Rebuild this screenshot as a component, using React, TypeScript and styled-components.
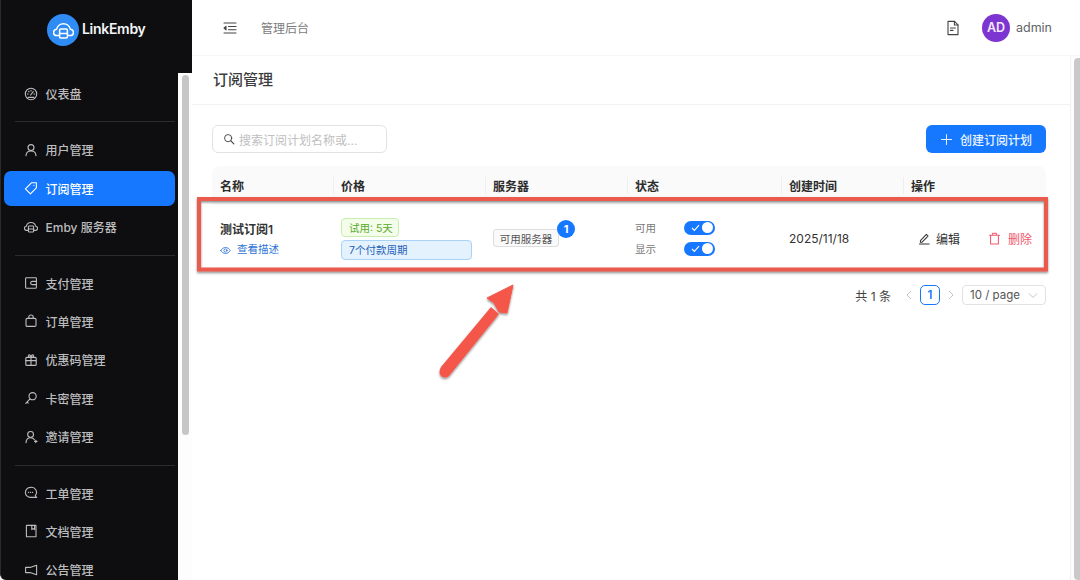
import React from "react";
import styled, { createGlobalStyle } from "styled-components";

const Global = createGlobalStyle`
  html, body { margin: 0; padding: 0; width: 1080px; height: 580px; overflow: hidden; background: #fff; }
  * { box-sizing: border-box; }
  body { font-family: Inter, "Noto Sans CJK SC", sans-serif; }
`;

const Page = styled.div`
  position: relative;
  display: flex;
  width: 1080px;
  height: 580px;
  overflow: hidden;
  background: #fff;
`;

const Sidebar = styled.aside`
  width: 192px;
  height: 580px;
  flex: none;
  display: flex;
  flex-direction: column;
  background: #0e0e10;
  border-left: 1px solid #2a2a2a;
  border-bottom-left-radius: 6px;
`;

const Brand = styled.div`
  height: 73px;
  flex: none;
  display: flex;
  align-items: flex-start;
  padding: 14px 0 0 46px;
  gap: 3px;
  color: #f2f4f7;
  font-size: 14px;
  font-weight: 600;
`;

const BrandText = styled.span`
  line-height: 30px;
  letter-spacing: -0.3px;
`;

const LogoDisc = styled.div`
  width: 32px;
  height: 32px;
  border-radius: 50%;
  background: #2f8cf5;
  display: flex;
  align-items: center;
  justify-content: center;
`;

const SideBody = styled.div`
  flex: 1;
  display: flex;
  min-height: 0;
`;

const Menu = styled.nav`
  width: 177px;
  flex: none;
  overflow: hidden;
  padding: 3px 3px 0 2.5px;
`;

const MenuItem = styled.div<{ $active?: boolean }>`
  height: 35px;
  margin-bottom: 3.4px;
  display: flex;
  align-items: center;
  gap: 8px;
  padding-left: 20px;
  border-radius: 7px;
  font-size: 12px;
  color: ${(p) => (p.$active ? "#fff" : "#bdbdbf")};
  font-weight: 500;
  background: ${(p) => (p.$active ? "#1677ff" : "transparent")};
  svg { flex: none; }
`;

const MenuDivider = styled.div`
  height: 1px;
  background: #2c2c2e;
  margin: 10.4px 0 10px 11px;
`;

const Track = styled.div`
  width: 14px;
  flex: none;
  background: #fdfdfd;
  padding: 2px 3px 0 4px;
`;

const Thumb = styled.div`
  height: 360px;
  background: #c6c6c6;
  border-radius: 4px;
`;

const Main = styled.main`
  flex: 1;
  min-width: 0;
  display: flex;
  flex-direction: column;
  background: #fff;
`;

const Header = styled.header`
  height: 56px;
  flex: none;
  display: flex;
  align-items: center;
  padding: 0 28px 0 31px;
  border-bottom: 1px solid #f6f6f6;
`;

const HeaderTitle = styled.span`
  margin-left: 24px;
  font-size: 12px;
  color: #7c7c7c;
`;

const HeaderRight = styled.div`
  margin-left: auto;
  display: flex;
  align-items: center;
`;

const Avatar = styled.div`
  width: 28px;
  height: 28px;
  margin-left: 22px;
  border-radius: 50%;
  background: #7c35d1;
  color: #f3eafc;
  font-size: 12.5px;
  font-weight: 600;
  display: flex;
  align-items: center;
  justify-content: center;
`;

const UserName = styled.span`
  margin-left: 6px;
  font-size: 12.5px;
  color: #5f6368;
`;

const Body = styled.div`
  flex: 1;
  min-height: 0;
  display: flex;
`;

const Content = styled.div`
  flex: 1;
  min-width: 0;
`;

const PageTitleBar = styled.div`
  height: 49px;
  display: flex;
  align-items: center;
  padding: 0 0 4px 21px;
  border-bottom: 1px solid #f2f2f2;
  font-size: 15px;
  font-weight: 500;
  color: #3c3c3c;
`;

const Toolbar = styled.div`
  display: flex;
  align-items: flex-start;
  justify-content: space-between;
  padding: 20px 24px 0 20px;
  height: 61px;
`;

const Search = styled.div`
  width: 175px;
  height: 28px;
  display: flex;
  align-items: center;
  gap: 4px;
  padding-left: 10px;
  border: 1px solid #e2e2e2;
  border-radius: 6px;
  font-size: 12px;
  color: #c0c0c0;
  svg { flex: none; }
`;

const PrimaryButton = styled.button`
  width: 120px;
  height: 28px;
  display: flex;
  align-items: center;
  justify-content: center;
  gap: 7px;
  padding: 0;
  border: 0;
  border-radius: 6px;
  background: #1677ff;
  color: #eaf3ff;
  font: 500 12px Inter, "Noto Sans CJK SC", sans-serif;
`;

const TableWrap = styled.div`
  margin: 0 24px 0 20px;
`;

const Row = styled.div`
  display: grid;
  grid-template-columns: 121px 152px 142px 154px 122px 1fr;
`;

const HeadRow = styled(Row)`
  height: 39px;
  background: #fafafa;
  border-radius: 8px 8px 0 0;
`;

const HeadCell = styled.div<{ $first?: boolean }>`
  position: relative;
  display: flex;
  align-items: center;
  padding-left: 8px;
  font-size: 12px;
  font-weight: 600;
  color: #2c2c2c;
  ${(p) =>
    p.$first
      ? ""
      : `&::before { content: ""; position: absolute; left: 0; top: 11px; height: 17px; width: 1px; background: #eeeeee; }`}
`;

const DataRow = styled(Row)`
  height: 67px;
  border-bottom: 1px solid #f0f0f0;
`;

const Cell = styled.div`
  display: flex;
  flex-direction: column;
  justify-content: center;
  padding-left: 8px;
  min-width: 0;
`;

const PlanName = styled.div`
  font-size: 12px;
  font-weight: 600;
  color: #333;
  line-height: 18px;
  margin-top: 3px;
`;

const DescLink = styled.div`
  display: flex;
  align-items: center;
  gap: 6px;
  margin-top: 3px;
  font-size: 10.5px;
  line-height: 16px;
  color: #2f74d8;
`;

const TagPill = styled.span<{ $kind: "green" | "blue" }>`
  display: flex;
  align-items: center;
  height: ${(p) => (p.$kind === "green" ? "19px" : "20px")};
  width: ${(p) => (p.$kind === "green" ? "58px" : "131px")};
  margin-top: ${(p) => (p.$kind === "green" ? "1px" : "3px")};
  padding-left: 7px;
  border-radius: 4px;
  font-size: 10.5px;
  border: 1px solid ${(p) => (p.$kind === "green" ? "#c9ecb0" : "#a9d2f7")};
  background: ${(p) => (p.$kind === "green" ? "#f4fde9" : "#e4f2fe")};
  color: ${(p) => (p.$kind === "green" ? "#5aa92e" : "#2660b8")};
`;

const ServerWrap = styled.div`
  position: relative;
  width: 66px;
`;

const ServerChip = styled.div`
  height: 18px;
  display: flex;
  align-items: center;
  justify-content: center;
  border: 1px solid #dedede;
  border-radius: 3px;
  background: #fafafa;
  font-size: 10.5px;
  color: #555;
`;

const Badge = styled.span`
  position: absolute;
  top: -9px;
  right: -16px;
  width: 18px;
  height: 18px;
  border-radius: 50%;
  background: #1677ff;
  color: #fff;
  font-size: 11px;
  font-weight: 700;
  display: flex;
  align-items: center;
  justify-content: center;
`;

const StatusLine = styled.div`
  display: flex;
  align-items: center;
  height: 21px;
  font-size: 10.5px;
  color: #777;
`;

const Switch = styled.span`
  width: 31px;
  height: 14px;
  margin-left: 28px;
  padding: 0 2px 0 7px;
  border-radius: 7px;
  background: #1677ff;
  display: flex;
  align-items: center;
  justify-content: space-between;
`;

const Knob = styled.span`
  width: 11px;
  height: 11px;
  border-radius: 50%;
  background: #fff;
`;

const DateText = styled.span`
  font-size: 12px;
  color: #333;
`;

const Actions = styled.div`
  display: flex;
  align-items: center;
  padding-left: 15px;
  height: 100%;
`;

const ActionLink = styled.span<{ $danger?: boolean }>`
  display: flex;
  align-items: center;
  gap: ${(p) => (p.$danger ? "7px" : "5px")};
  font-size: 12px;
  margin-right: 28px;
  white-space: nowrap;
  color: ${(p) => (p.$danger ? "#f0566b" : "#333")};
`;

const Pager = styled.div`
  display: flex;
  align-items: center;
  justify-content: flex-end;
  height: 20px;
  margin-top: 13px;
`;

const PagerTotal = styled.span`
  font-size: 12px;
  color: #444;
  margin-right: 14px;
`;

const PagerNow = styled.span`
  width: 20px;
  height: 20px;
  margin: 0 7px;
  border: 1px solid #1677ff;
  border-radius: 5px;
  display: flex;
  align-items: center;
  justify-content: center;
  font-size: 11.5px;
  font-weight: 600;
  color: #1677ff;
`;

const PageSize = styled.span`
  width: 84px;
  height: 20px;
  margin-left: 7px;
  padding: 0 7px;
  border: 1px solid #e2e2e2;
  border-radius: 4px;
  display: flex;
  align-items: center;
  justify-content: space-between;
  font-size: 11.5px;
  color: #555;
`;

const RightTrack = styled.div`
  width: 10px;
  flex: none;
  background: #fdfdfd;
  border-left: 1px solid #f0f0f0;
  padding: 2px 0 0 3px;
`;

const RightThumb = styled.div`
  height: 522px;
  background: #c9c9c9;
  border-radius: 4px 0 0 4px;
`;

const Annotation = styled.svg`
  position: absolute;
  left: 0;
  top: 0;
  width: 1080px;
  height: 580px;
  pointer-events: none;
`;

type IconProps = { c?: string; s?: number; w?: number; children: React.ReactNode };
const Ic = ({ c = "#bdbdbf", s = 14, w = 1.1, children }: IconProps) => (
  <svg width={s} height={s} viewBox="0 0 14 14" fill="none" stroke={c} strokeWidth={w} strokeLinecap="round" strokeLinejoin="round">
    {children}
  </svg>
);

const CloudShape = () => (
  <>
    <path d="M3.8 10.4H2.6A2.1 2.1 0 0 1 2.4 6.2 4.7 4.7 0 0 1 11.6 6.2 2.1 2.1 0 0 1 11.4 10.4H10.2" />
    <rect x="4.4" y="6" width="5.2" height="6" rx="0.8" />
    <path d="M4.4 9H9.6" />
  </>
);

type NavEntry = { t: string; i: React.ReactNode; a?: boolean };
const items: (string | NavEntry)[] = [
  { t: "仪表盘", i: <><circle cx="7" cy="7" r="5.7" /><path d="M6.6 8 9.2 4.6M3.4 7H4.2M9.9 7H10.6M4.6 4.4 5.1 4.9M7 3.2V3.9M4 10.4H10" /></> },
  "d",
  { t: "用户管理", i: <><circle cx="7" cy="4.6" r="3" /><path d="M2 12.6C2.2 9.8 4.2 8 7 8S11.8 9.8 12 12.6" /></> },
  { t: "订阅管理", a: true, i: <><path d="M1.4 7.8 7.4 1.8 12.4 1.8 12.4 6.8 6.4 12.8Z" /><path d="M9.9 4.3 10 4.4" /></> },
  { t: "Emby 服务器", i: <CloudShape /> },
  "d",
  { t: "支付管理", i: <><rect x="1.6" y="1.8" width="10.8" height="10.4" rx="0.6" /><path d="M12.4 5.4H8.2A1.6 1.6 0 0 0 8.2 8.6H12.4" /></> },
  { t: "订单管理", i: <><rect x="2" y="4.4" width="10" height="8" rx="1.2" /><path d="M4.8 4.4V3A2.2 2 0 0 1 9.2 3V4.4" /></> },
  { t: "优惠码管理", i: <><rect x="1.8" y="4.4" width="10.4" height="8" rx="1" /><path d="M1.8 7.6H12.2M7 4.4V12.4M7 4.4C5 4.4 3.8 3.4 4.6 2.2 5.4 1.2 7 2.6 7 4.4 7 2.6 8.6 1.2 9.4 2.2 10.2 3.4 9 4.4 7 4.4Z" /></> },
  { t: "卡密管理", i: <><circle cx="8.6" cy="5.2" r="3.6" /><path d="M6 7.8 1.8 12.4M3 11 4.2 12.2" /></> },
  { t: "邀请管理", i: <><circle cx="6.6" cy="4.4" r="2.9" /><path d="M2 12.6C2.2 9.8 4 7.8 6.6 7.8S9.8 8.6 10.4 9.8M10.6 11.4H13M11.8 10.2V12.6" /></> },
  "d",
  { t: "工单管理", i: <><path d="M6.4 1.4A5 5 0 1 0 6.4 11.4H12.6L11.2 9.6A5 5 0 0 0 6.4 1.4Z" /><path d="M4.4 6.4H4.6M6.4 6.4H6.6M8.4 6.4H8.6" /></> },
  { t: "文档管理", i: <><rect x="2.4" y="1.4" width="9.6" height="11.4" rx="0.4" /><path d="M7.8 1.4V5.6L9.2 4.6 10.6 5.6V1.4" /></> },
  { t: "公告管理", i: <path d="M12.6 2.2V11.8L6 9.6H1.6V4.4H6Z" /> },
];

const Check = () => (
  <svg width="9" height="8" viewBox="0 0 9 8" fill="none" stroke="#fff" strokeWidth={1.1}>
    <path d="M1 4 3.4 6.4 8 1.2" />
  </svg>
);

export default function App() {
  return (
    <Page>
      <Global />
      <Sidebar>
        <Brand>
          <LogoDisc>
            <svg width="21" height="21" viewBox="0 0 14 14" fill="none" stroke="#fff" strokeWidth={1} strokeLinecap="round" strokeLinejoin="round">
              <CloudShape />
            </svg>
          </LogoDisc>
          <BrandText>LinkEmby</BrandText>
        </Brand>
        <SideBody>
          <Menu>
            {items.map((it, i) =>
              typeof it === "string" ? (
                <MenuDivider key={i} />
              ) : (
                <MenuItem key={i} $active={it.a}>
                  <Ic c={it.a ? "#fff" : undefined}>{it.i}</Ic>
                  {it.t}
                </MenuItem>
              )
            )}
          </Menu>
          <Track>
            <Thumb />
          </Track>
        </SideBody>
      </Sidebar>
      <Main>
        <Header>
          <svg width="14" height="14" viewBox="0 0 14 14" fill="none" stroke="#444" strokeWidth={1.1} strokeLinecap="round" strokeLinejoin="round">
            <path d="M1 2H13M5.5 5.5H13M5.5 8.8H13M1 12H13" />
            <path d="M3 5.4 1 7.1 3 8.8Z" fill="#444" />
          </svg>
          <HeaderTitle>管理后台</HeaderTitle>
          <HeaderRight>
            <svg width="14" height="16" viewBox="0 0 14 16" fill="none" stroke="#444" strokeWidth={1.1} strokeLinejoin="round" strokeLinecap="round">
              <path d="M2 1.4H8.6L12 4.8V14.6H2Z" />
              <path d="M8.4 1.4V5H12M4.4 8H9.4M4.4 10.4H7" />
            </svg>
            <Avatar>AD</Avatar>
            <UserName>admin</UserName>
          </HeaderRight>
        </Header>
        <Body>
          <Content>
            <PageTitleBar>订阅管理</PageTitleBar>
            <Toolbar>
              <Search>
                <Ic c="#444" s={12}>
                  <circle cx="6" cy="6" r="4.2" />
                  <path d="M9.2 9.2 12.6 12.6" strokeWidth={1.3} />
                </Ic>
                搜索订阅计划名称或...
              </Search>
              <PrimaryButton>
                <Ic c="#eaf3ff" s={13}>
                  <path d="M7 1.5V12.5M1.5 7H12.5" />
                </Ic>
                创建订阅计划
              </PrimaryButton>
            </Toolbar>
            <TableWrap>
              <HeadRow>
                <HeadCell $first>名称</HeadCell>
                <HeadCell>价格</HeadCell>
                <HeadCell>服务器</HeadCell>
                <HeadCell>状态</HeadCell>
                <HeadCell>创建时间</HeadCell>
                <HeadCell>操作</HeadCell>
              </HeadRow>
              <DataRow>
                <Cell>
                  <PlanName>测试订阅1</PlanName>
                  <DescLink>
                    <Ic c="#2f74d8" s={11}>
                      <path d="M1 7C2.4 4.6 4.4 3.2 7 3.2S11.6 4.6 13 7C11.6 9.4 9.6 10.8 7 10.8S2.4 9.4 1 7Z" />
                      <circle cx="7" cy="7" r="2" />
                    </Ic>
                    查看描述
                  </DescLink>
                </Cell>
                <Cell>
                  <TagPill $kind="green">试用: 5天</TagPill>
                  <TagPill $kind="blue">7个付款周期</TagPill>
                </Cell>
                <Cell>
                  <ServerWrap>
                    <ServerChip>可用服务器</ServerChip>
                    <Badge>1</Badge>
                  </ServerWrap>
                </Cell>
                <Cell>
                  <StatusLine>
                    可用
                    <Switch>
                      <Check />
                      <Knob />
                    </Switch>
                  </StatusLine>
                  <StatusLine>
                    显示
                    <Switch>
                      <Check />
                      <Knob />
                    </Switch>
                  </StatusLine>
                </Cell>
                <Cell>
                  <DateText>2025/11/18</DateText>
                </Cell>
                <Actions>
                  <ActionLink>
                    <Ic c="#333" s={13}>
                      <path d="M2.6 9.2 9 2.6 10.8 4.4 4.4 11H2.6ZM1.6 13H12" />
                    </Ic>
                    编辑
                  </ActionLink>
                  <ActionLink $danger>
                    <Ic c="#f0566b" s={13}>
                      <path d="M2.8 3.8V12.8H11.2V3.8M1.6 3.4H12.4M5 3.2V1.4H9V3.2" />
                    </Ic>
                    删除
                  </ActionLink>
                </Actions>
              </DataRow>
              <Pager>
                <PagerTotal>共 1 条</PagerTotal>
                <svg width="8" height="10" viewBox="0 0 8 10" fill="none" stroke="#c4c4c4" strokeWidth={1}>
                  <path d="M6 1 2 5 6 9" />
                </svg>
                <PagerNow>1</PagerNow>
                <svg width="8" height="10" viewBox="0 0 8 10" fill="none" stroke="#c4c4c4" strokeWidth={1}>
                  <path d="M2 1 6 5 2 9" />
                </svg>
                <PageSize>
                  10 / page
                  <svg width="10" height="7" viewBox="0 0 10 7" fill="none" stroke="#c4c4c4" strokeWidth={1}>
                    <path d="M1 1.5 5 5.5 9 1.5" />
                  </svg>
                </PageSize>
              </Pager>
            </TableWrap>
          </Content>
          <RightTrack>
            <RightThumb />
          </RightTrack>
        </Body>
      </Main>
      <Annotation viewBox="0 0 1080 580">
        <defs>
          <filter id="sh" x="-5%" y="-20%" width="110%" height="140%">
            <feDropShadow dx="0" dy="1.5" stdDeviation="1" floodColor="#000" floodOpacity="0.45" />
          </filter>
        </defs>
        <rect x="199" y="199" width="847" height="70.5" fill="none" stroke="#ea5a4e" strokeWidth={4} filter="url(#sh)" />
        <g filter="url(#sh)">
          <path d="M441 367 L491 307 L499 314 L449 376 Q445 379 441 376 Q438 372 441 367 Z" fill="#f4574a" />
          <path d="M513 285 L487 298 L494 303 L499 312 L507 313 Z" fill="#f4574a" stroke="#f4574a" strokeWidth={1} strokeLinejoin="round" />
        </g>
      </Annotation>
    </Page>
  );
}
